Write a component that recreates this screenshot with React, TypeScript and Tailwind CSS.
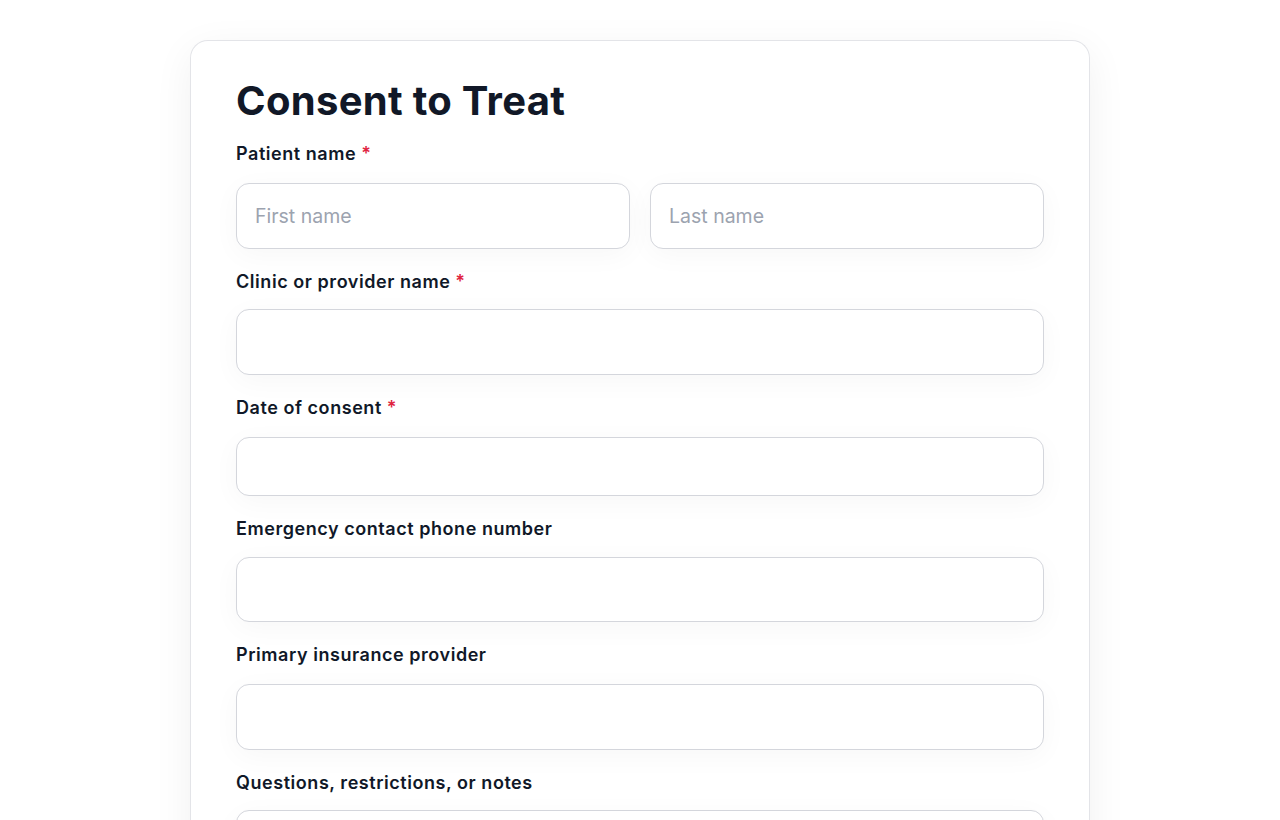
import React from "react";

const font = { fontFamily: "Inter, 'Noto Sans', sans-serif" };

function Label({ text, required, mb }: { text: string; required?: boolean; mb: string }) {
  return (
    <label className={`block text-[18px] leading-[24px] font-semibold text-[#101828] tracking-[0.55px] ${mb}`}>
      {text}
      {required && <span className="text-[#e0243f] ml-[5px]">*</span>}
    </label>
  );
}

function Field({ placeholder, h = "h-[66px]" }: { placeholder?: string; h?: string }) {
  return (
    <input
      type="text"
      placeholder={placeholder}
      className={`block w-full ${h} rounded-[13px] border border-[#d4d6dc] bg-white px-[18px] text-[19.5px] text-[#111827] placeholder:text-[#9ca3af] outline-none shadow-[0_6px_28px_rgba(15,23,42,0.035)]`}
      style={font}
    />
  );
}

export default function App() {
  return (
    <div className="min-h-[820px] bg-white flex justify-center pt-[40px]" style={font}>
      <div className="w-[900px] rounded-t-[18px] border border-[#e3e4e8] border-b-0 bg-white shadow-[0_10px_40px_rgba(15,23,42,0.06)] px-[45px] pt-[36px] pb-[40px]">
        <h1 className="text-[40px] leading-[48px] font-bold text-[#111827] tracking-[0.3px] mb-[17px]">
          Consent to Treat
        </h1>

        <Label text="Patient name" required mb="mb-[17px]" />
        <div className="grid grid-cols-2 gap-[20px]">
          <Field placeholder="First name" />
          <Field placeholder="Last name" />
        </div>

        <div className="mt-[21px]">
          <Label text="Clinic or provider name" required mb="mb-[15px]" />
          <Field />
        </div>

        <div className="mt-[21px]">
          <Label text="Date of consent" required mb="mb-[17px]" />
          <Field h="h-[59px]" />
        </div>

        <div className="mt-[21px]">
          <Label text="Emergency contact phone number" mb="mb-[16px]" />
          <Field h="h-[65px]" />
        </div>

        <div className="mt-[21px]">
          <Label text="Primary insurance provider" mb="mb-[17px]" />
          <Field />
        </div>

        <div className="mt-[21px]">
          <Label text="Questions, restrictions, or notes" mb="mb-[15px]" />
          <textarea
            className="block w-full h-[120px] rounded-[13px] border border-[#d4d6dc] bg-white px-[18px] py-[14px] text-[18px] outline-none resize-none shadow-[0_6px_28px_rgba(15,23,42,0.035)]"
            style={font}
          />
        </div>
      </div>
    </div>
  );
}
